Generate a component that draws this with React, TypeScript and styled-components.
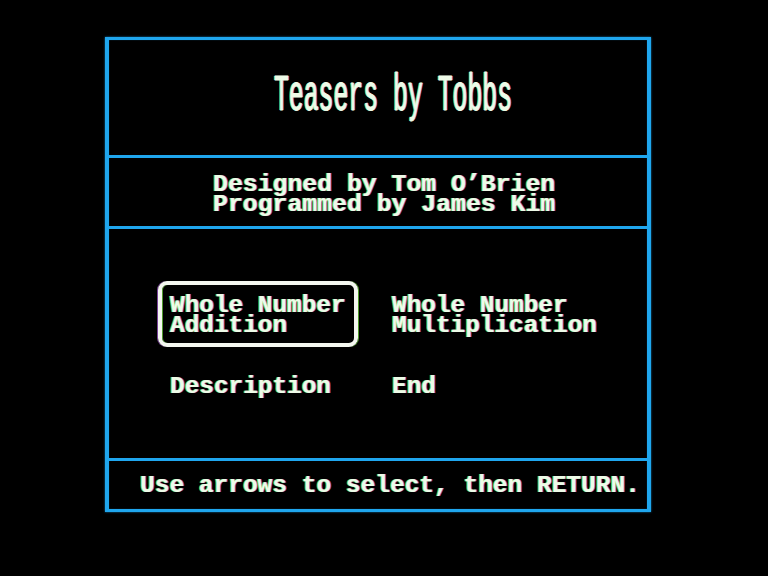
import React from "react";
import styled, { createGlobalStyle } from "styled-components";

const Global = createGlobalStyle`
  html, body {
    margin: 0;
    padding: 0;
    background: #000;
  }
  #root {
    width: 768px;
    height: 576px;
    background: #000;
  }
`;

const CYAN = "#1fa6ee";
const INK = "#eefbe8";
const FS = "24.8px";
const FS_MENU = "24.4px";

const Screen = styled.div`
  width: 768px;
  height: 576px;
  box-sizing: border-box;
  padding: 37px 117px 0 105px;
  background: #000;
  font-family: "Liberation Mono", "DejaVu Sans Mono", monospace;
  color: ${INK};
`;

const Frame = styled.div`
  width: 546px;
  height: 475px;
  box-sizing: border-box;
  border-style: solid;
  border-color: ${CYAN};
  border-width: 3px 4px;
  display: flex;
  flex-direction: column;
  box-shadow: 0 0 2px rgba(31, 166, 238, 0.7), inset 0 0 1px rgba(31, 166, 238, 0.7);
`;

const Section = styled.div<{ $h: number; $last?: boolean }>`
  height: ${(p) => p.$h}px;
  flex: none;
  box-sizing: border-box;
  border-bottom: ${(p) => (p.$last ? "none" : `3px solid ${CYAN}`)};
  display: flex;
  align-items: center;
`;

const glow = `
  text-shadow: -1px 0 rgba(130, 255, 70, 0.8), 1px 0 rgba(200, 110, 255, 0.8);
`;

const Title = styled.div`
  width: 100%;
  box-sizing: border-box;
  padding-left: 30px;
  text-align: center;
  font-size: ${FS};
  line-height: 20px;
  transform: scaleY(2.1);
  transform-origin: center;
  margin-top: -6px;
  -webkit-text-stroke: 0.4px ${INK};
  ${glow}
`;

const Credits = styled.div`
  padding-left: 104px;
  padding-top: 4px;
  font-weight: bold;
  font-size: ${FS};
  line-height: 20px;
  white-space: pre;
  ${glow}
`;

const MenuArea = styled.div`
  height: 232px;
  flex: none;
  box-sizing: border-box;
  border-bottom: 3px solid ${CYAN};
  padding: 52px 0 0 49px;
  display: grid;
  grid-template-columns: 200px auto;
  column-gap: 22px;
  row-gap: 15px;
  align-content: start;
  justify-content: start;
`;

const Item = styled.div<{ $selected?: boolean }>`
  box-sizing: border-box;
  border: 4px solid ${(p) => (p.$selected ? "#f4f7f0" : "transparent")};
  border-radius: 9px;
  padding: 11px 8px 7px 8px;
  font-weight: bold;
  font-size: ${FS_MENU};
  line-height: 20px;
  white-space: pre;
  ${glow}
  ${(p) =>
    p.$selected
      ? "box-shadow: -1px 0 0 rgba(200,110,255,0.6), 1px 0 0 rgba(130,255,70,0.6), inset 1px 0 0 rgba(130,255,70,0.6);"
      : ""}
`;

const Footer = styled.div`
  padding-left: 31px;
  padding-top: 2px;
  font-weight: bold;
  font-size: 24.5px;
  line-height: 20px;
  white-space: pre;
  ${glow}
`;

export default function App() {
  return (
    <>
      <Global />
      <Screen>
        <Frame>
          <Section $h={118}>
            <Title>Teasers by Tobbs</Title>
          </Section>
          <Section $h={71}>
            <Credits>
              {"Designed by Tom O\u2019Brien\nProgrammed by James Kim"}
            </Credits>
          </Section>
          <MenuArea>
            <Item $selected>{"Whole Number\nAddition"}</Item>
            <Item>{"Whole Number\nMultiplication"}</Item>
            <Item>Description</Item>
            <Item>End</Item>
          </MenuArea>
          <Section $h={48} $last>
            <Footer>Use arrows to select, then RETURN.</Footer>
          </Section>
        </Frame>
      </Screen>
    </>
  );
}
